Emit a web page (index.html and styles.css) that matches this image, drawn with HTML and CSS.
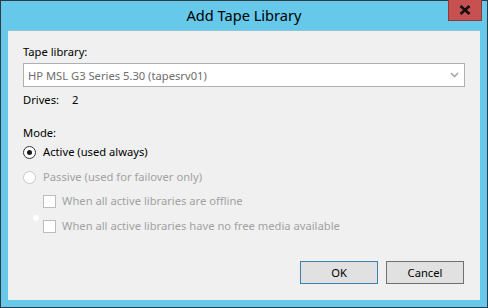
FILE: index.html
```html
<!DOCTYPE html>
<html lang="en">
<head>
    <meta charset="UTF-8">
    <title>Add Tape Library</title>
    <link rel="stylesheet" href="styles.css">
</head>
<body>
    <div class="window">
        <div class="titlebar">
            <span class="title">Add Tape Library</span>
            <div class="close-btn">
                <svg width="12" height="10" viewBox="0 0 12 10">
                    <path d="M1.5 1 L10.5 9 M10.5 1 L1.5 9" stroke="#111" stroke-width="2.6"/>
                </svg>
            </div>
        </div>

        <div class="panel">
            <div class="row">Tape library:</div>
            <div class="combo">
                <span class="combo-text">HP MSL G3 Series 5.30 (tapesrv01)</span>
                <svg class="combo-arrow" width="9" height="6" viewBox="0 0 9 6">
                    <path d="M1 1 L4.5 4.5 L8 1" stroke="#a8a8a8" stroke-width="1.6" fill="none"/>
                </svg>
            </div>
            <div class="row drives"><span class="drives-label">Drives:</span><span>2</span></div>

            <div class="row mode">Mode:</div>
            <div class="row option active-opt">
                <span class="radio checked"></span>
                <span>Active (used always)</span>
            </div>
            <div class="row option passive-opt disabled">
                <span class="radio"></span>
                <span>Passive (used for failover only)</span>
            </div>
            <div class="row sub-option first disabled">
                <span class="checkbox"></span>
                <span>When all active libraries are offline</span>
            </div>
            <div class="row sub-option second disabled">
                <span class="dot"></span>
                <span class="checkbox"></span>
                <span>When all active libraries have no free media available</span>
            </div>

            <div class="buttons">
                <div class="btn default">OK</div>
                <div class="btn">Cancel</div>
            </div>
        </div>
    </div>
</body>
</html>
```

FILE: styles.css
```css
body {
    margin: 0;
    font-family: "Noto Sans", "Open Sans", sans-serif;
    font-size: 11.2px;
    color: #000;
}

.window {
    width: 486px;
    height: 306px;
    border: 1px solid #2e3b43;
    background-color: #66c9ea;
    display: flex;
    flex-direction: column;
    position: relative;
}

.titlebar {
    height: 29px;
    display: flex;
    align-items: center;
    justify-content: center;
}

.title {
    font-size: 14.6px;
    margin-top: -1px;
}

.close-btn {
    position: absolute;
    top: -1px;
    right: 5px;
    width: 32px;
    height: 20px;
    background-color: #c75050;
    border: 1px solid #8a3a3a;
    border-top: none;
    display: flex;
    align-items: center;
    justify-content: center;
}

.panel {
    margin: 0 7px 7px 7px;
    flex: 1;
    background-color: #f0f0f0;
    border-top: 1px solid #8fc3d8;
    padding: 13px 15px 16px 15px;
    display: flex;
    flex-direction: column;
}

.row {
    height: 16px;
    line-height: 16px;
    display: flex;
    align-items: center;
    white-space: nowrap;
}

.combo {
    margin-top: 3px;
    height: 22px;
    border: 1px solid #acb0b0;
    background-color: #fff;
    display: flex;
    align-items: center;
    justify-content: space-between;
    padding: 0 5px 0 4px;
}

.combo-text {
    color: #6d6d6d;
}

.drives {
    margin-top: 5px;
}

.drives-label {
    width: 49px;
}

.mode {
    margin-top: 17px;
}

.active-opt {
    margin-top: 3px;
}

.passive-opt {
    margin-top: 9px;
}

.sub-option {
    padding-left: 20px;
    position: relative;
}

.sub-option.first {
    margin-top: 8px;
}

.sub-option.second {
    margin-top: 9px;
}

.disabled {
    color: #a2a2a2;
}

.radio {
    width: 11px;
    height: 11px;
    border: 1px solid #333;
    border-radius: 50%;
    background-color: #fff;
    margin-right: 7px;
    position: relative;
    flex-shrink: 0;
}

.radio.checked::after {
    content: "";
    position: absolute;
    left: 3px;
    top: 3px;
    width: 5px;
    height: 5px;
    border-radius: 50%;
    background-color: #1a1a1a;
}

.disabled .radio {
    border-color: #c8c8c8;
}

.checkbox {
    width: 11px;
    height: 11px;
    border: 1px solid #bcbcbc;
    background-color: #fff;
    margin-right: 6px;
    flex-shrink: 0;
}

.dot {
    position: absolute;
    left: 10px;
    top: -3px;
    width: 6px;
    height: 6px;
    border-radius: 50%;
    background-color: #fff;
}

.buttons {
    margin-top: auto;
    display: flex;
    justify-content: flex-end;
    gap: 8px;
    padding-right: 1px;
}

.btn {
    width: 76px;
    height: 21px;
    line-height: 21px;
    text-align: center;
    background-color: #e1e1e1;
    border: 1px solid #707070;
}

.btn.default {
    border-color: #3c7fb1;
}
```
